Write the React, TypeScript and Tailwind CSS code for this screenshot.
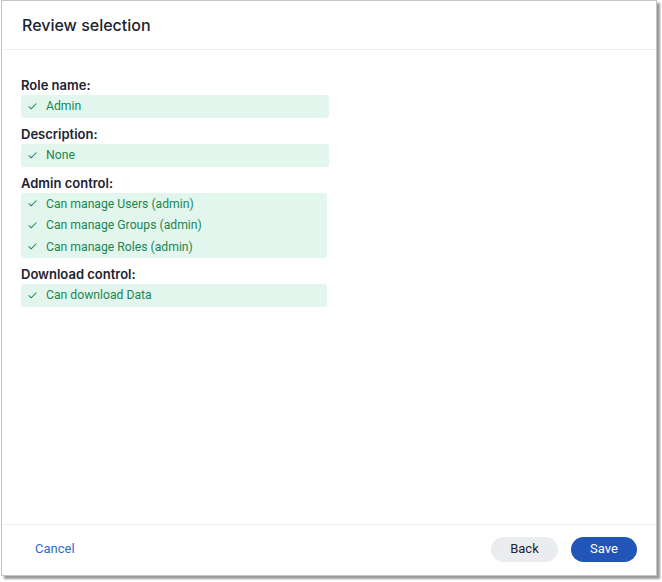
import { Check } from "lucide-react";

type Section = { label: string; items: string[]; w: string };

const SECTIONS: Section[] = [
  { label: "Role name:", items: ["Admin"], w: "w-[308px]" },
  { label: "Description:", items: ["None"], w: "w-[308px]" },
  {
    label: "Admin control:",
    items: [
      "Can manage Users (admin)",
      "Can manage Groups (admin)",
      "Can manage Roles (admin)",
    ],
    w: "w-[306px]",
  },
  { label: "Download control:", items: ["Can download Data"], w: "w-[306px]" },
];

function Row({ text, multi }: { text: string; multi: boolean }) {
  return (
    <div
      className={`flex items-center gap-[8px] pl-[6px] text-[12.2px] text-[#1a8752] ${
        multi ? "h-[21.5px]" : "h-[23px]"
      }`}
      style={{ fontFamily: "Roboto, 'Liberation Sans', sans-serif" }}
    >
      <Check className="w-[11px] h-[11px] shrink-0" strokeWidth={2.2} aria-hidden />
      <span>{text}</span>
    </div>
  );
}

export default function App() {
  return (
    <div
      className="w-[662px] h-[582px] bg-white"
      style={{ fontFamily: "Inter, 'Liberation Sans', sans-serif" }}
    >
      <div className="ml-[1px] w-[656px] h-[576px] bg-white border border-[#c4c4c4] shadow-[3px_3px_2px_rgba(0,0,0,0.4)] flex flex-col">
        <div className="h-[49px] shrink-0 flex items-center pl-[20px] border-b border-[#efefef]">
          <h1 className="text-[16px] font-medium text-[#1d232f]">Review selection</h1>
        </div>

        <div className="flex-1 pt-[26px] pl-[19px] flex flex-col gap-[7px]">
          {SECTIONS.map((s) => (
            <div key={s.label}>
              <p className="text-[13px] leading-[18px] font-semibold text-[#1d232f] mb-[1px]">
                {s.label}
              </p>
              <div className={`${s.w} rounded-[3px] bg-[#e2f6ee] overflow-hidden`}>
                {s.items.map((it) => (
                  <Row key={it} text={it} multi={s.items.length > 1} />
                ))}
              </div>
            </div>
          ))}
        </div>

        <div
          className="h-[51px] pb-[2px] shrink-0 border-t border-[#efefef] flex items-center pl-[33px] pr-[19px]"
          style={{ fontFamily: "Roboto, 'Liberation Sans', sans-serif" }}
        >
          <button className="text-[13px] text-[#2e6bd0]">Cancel</button>
          <div className="ml-auto flex items-center gap-[13px]">
            <button className="w-[67px] h-[25px] rounded-full bg-[#eaecef] text-[13px] text-[#1d232f]">
              Back
            </button>
            <button className="w-[66px] h-[25px] rounded-full bg-[#2155b7] text-[13px] text-white">
              Save
            </button>
          </div>
        </div>
      </div>
    </div>
  );
}
